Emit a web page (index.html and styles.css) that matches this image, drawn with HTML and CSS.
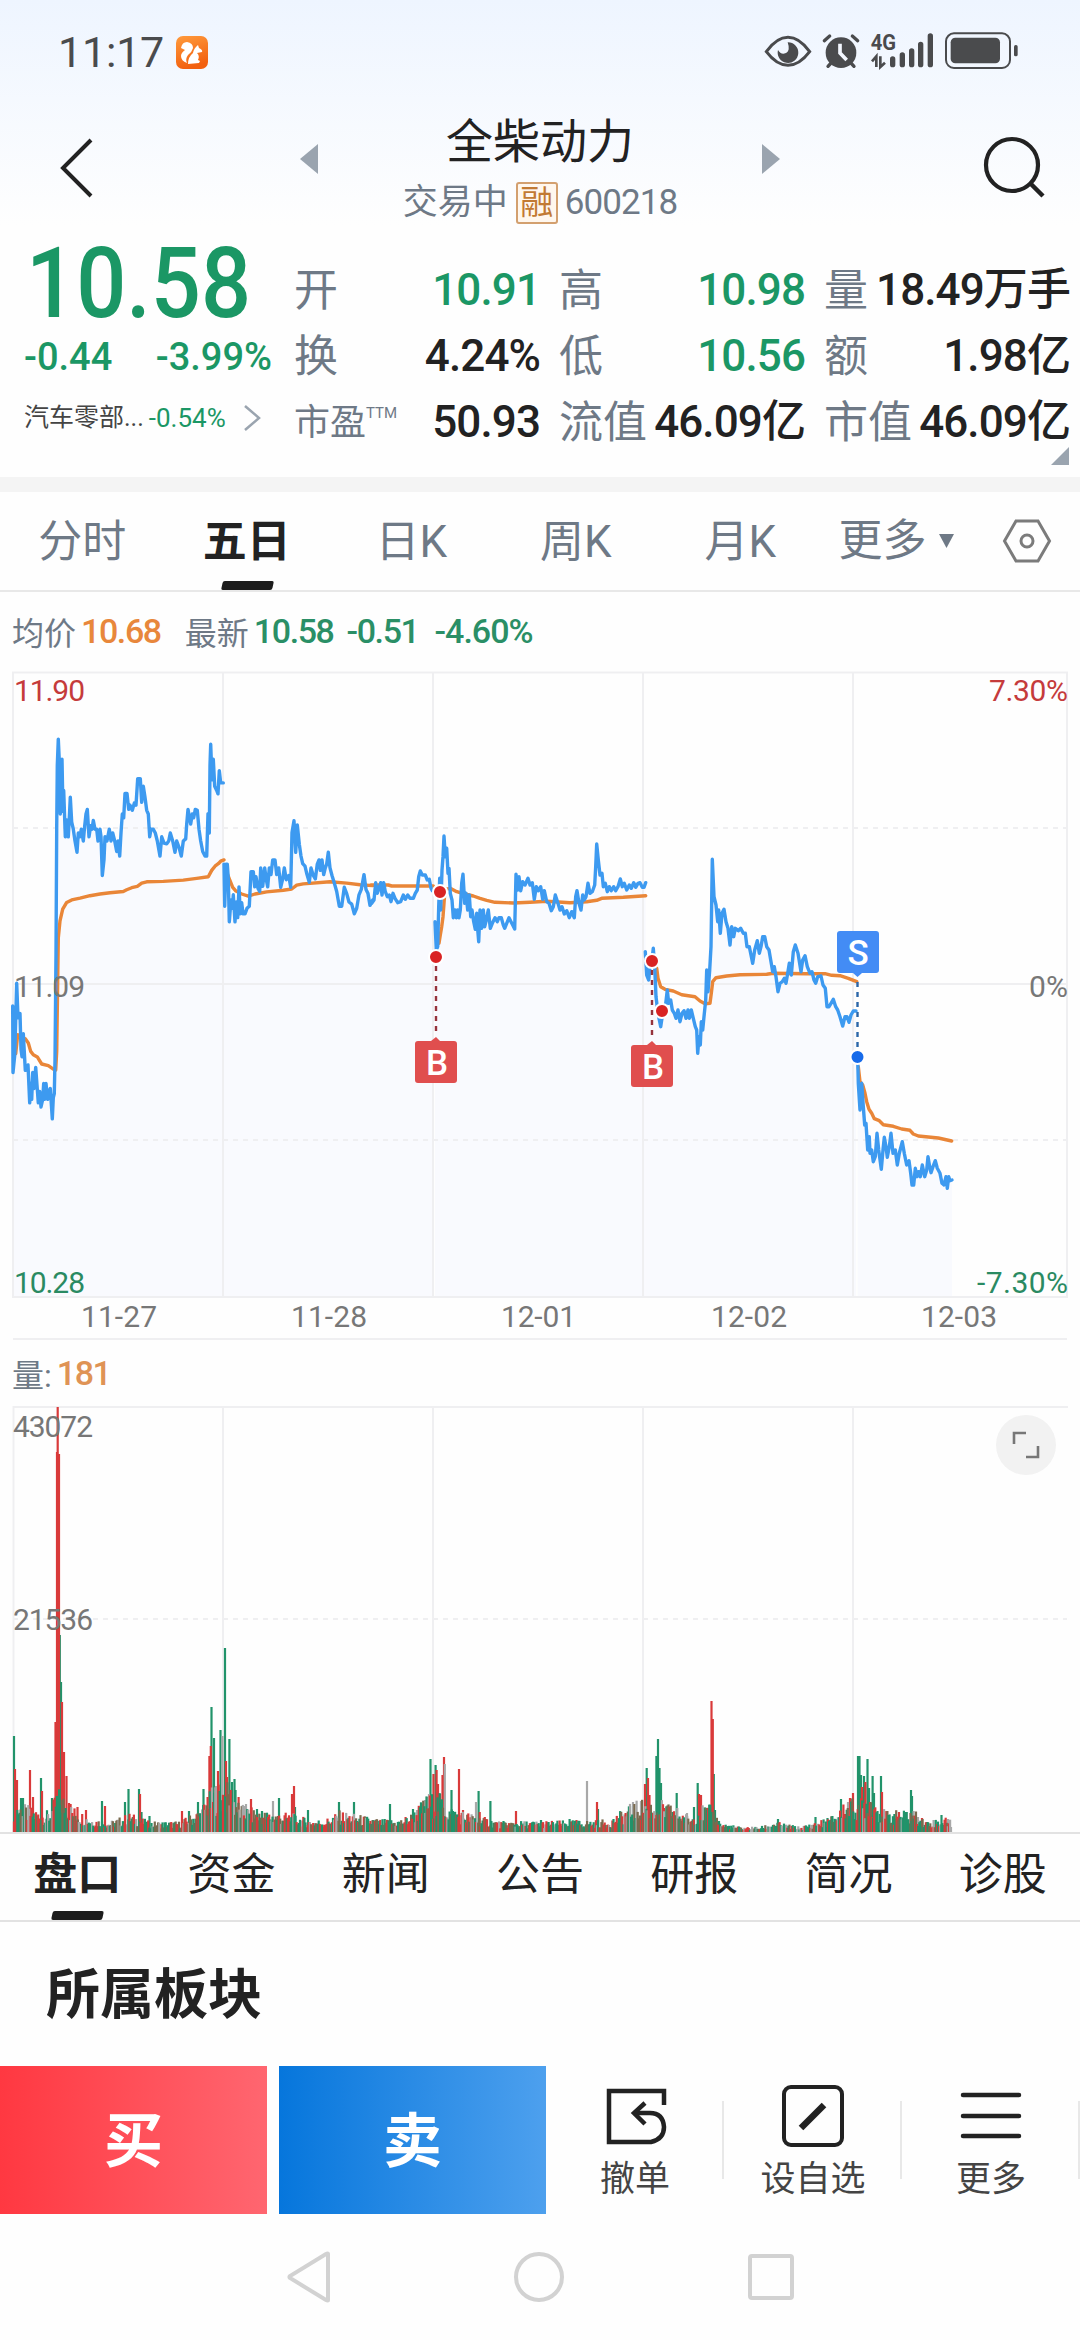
FILE: index.html
```
<!DOCTYPE html>
<html lang="zh-CN">
<head>
  <meta charset="utf-8">
  <meta name="viewport" content="width=device-width">
  <title>全柴动力 600218</title>
  <link rel="stylesheet" href="styles.css">
</head>
<body>

  <div class="top">
    <div class="status">
      <span class="clock">11:17</span>
      <svg class="app-icon" width="32" height="33" viewBox="0 0 32 33">
        <defs><linearGradient id="org" x1="0" y1="0" x2="0.3" y2="1"><stop offset="0" stop-color="#ff9b3c"/><stop offset="1" stop-color="#f2600f"/></linearGradient></defs>
        <rect width="32" height="33" rx="7" fill="url(#org)"/>
        <path fill="#fff" d="M5 12 Q6 6 11 6 Q17 7 17 12 Q16 16 12 19 Q9 23 11 27 Q5 25 5 20 Q5 17 9 14 Z"/>
        <path fill="#fff" d="M22 9 L23 12 Q27 14 26 16 L21 17 Q24 20 22 24 L24 25 L23 27 L12 28 Q12 21 17 17 Q18 12 22 9 Z"/>
      </svg>
      <svg class="status-icons" width="280" height="60" viewBox="0 0 840 180" fill="#4a4b4d">
        <path d="M49 95 Q80 52 114 52 Q148 52 179 95 Q148 136 114 136 Q80 136 49 95 Z" fill="none" stroke="#4a4b4d" stroke-width="9"/>
        <path d="M113 67 A31 31 0 1 1 84 90 Q90 101 100 101 Q113 101 116 88 Q117 78 113 67 Z"/>
        <circle cx="273" cy="98" r="46"/>
        <path d="M223 62 L239 48 M323 62 L307 48 M234 139 L246 126 M312 139 L300 126" stroke="#4a4b4d" stroke-width="10" stroke-linecap="round"/>
        <path d="M270 71 V99 L290 120" stroke="#f3f7ff" stroke-width="11" fill="none"/>
        <text x="362" y="91" class="net" textLength="76" lengthAdjust="spacingAndGlyphs">4G</text>
        <path d="M366 124 L379 109 V141 M405 128 L391 141 V109" fill="none" stroke="#4a4b4d" stroke-width="8"/>
        <path d="M428 117 V134 M457 105 V134 M485 93 V134 M512 73 V134 M541 48 V134" stroke="#4a4b4d" stroke-width="16" stroke-linecap="round"/>
        <rect x="588" y="40" width="192" height="104" rx="24" fill="none" stroke="#4a4b4d" stroke-width="6"/>
        <rect x="602" y="53" width="148" height="77" rx="14"/>
        <rect x="792" y="75" width="11" height="34" rx="5"/>
      </svg>
    </div>

    <div class="header">
      <svg class="back" width="40" height="64" viewBox="0 0 40 64"><path d="M34 5 L6 33 L34 61" fill="none" stroke="#222" stroke-width="4"/></svg>
      <svg class="arrow prev" width="18" height="30"><path d="M18 0 V30 L0 15 Z" fill="#9aa4af"/></svg>
      <div class="name">
        <h1>全柴动力</h1>
        <p>交易中<i>融</i><span class="code">600218</span></p>
      </div>
      <svg class="arrow next" width="18" height="30"><path d="M0 0 V30 L18 15 Z" fill="#9aa4af"/></svg>
      <svg class="search" width="64" height="62" viewBox="0 0 64 62"><circle cx="29" cy="29" r="26" fill="none" stroke="#222" stroke-width="4.2"/><path d="M47 47 L60 60" stroke="#222" stroke-width="4.5"/></svg>
    </div>

    <div class="quote">
      <div class="last">
        <div class="price">10.58</div>
        <div class="change"><span>-0.44</span><span>-3.99%</span></div>
        <div class="sector">汽车零部...<b>-0.54%</b><svg width="18" height="28" viewBox="0 0 18 28"><path d="M2 2 L16 14 L2 26" fill="none" stroke="#9aa4af" stroke-width="2.5"/></svg></div>
      </div>
      <dl class="stats">
        <div><dt>开</dt><dd class="down">10.91</dd></div>
        <div><dt>高</dt><dd class="down">10.98</dd></div>
        <div><dt>量</dt><dd>18.49万手</dd></div>
        <div><dt>换</dt><dd>4.24%</dd></div>
        <div><dt>低</dt><dd class="down">10.56</dd></div>
        <div><dt>额</dt><dd>1.98亿</dd></div>
        <div><dt class="small">市盈<sup>TTM</sup></dt><dd>50.93</dd></div>
        <div><dt>流值</dt><dd>46.09亿</dd></div>
        <div><dt>市值</dt><dd>46.09亿</dd></div>
      </dl>
      <svg class="corner" width="18" height="18"><path d="M18 0 V18 H0 Z" fill="#9aa4af"/></svg>
    </div>
  </div>

  <div class="periods">
    <a>分时</a>
    <a class="active">五日</a>
    <a>日K</a>
    <a>周K</a>
    <a>月K</a>
    <a class="more">更多<svg width="15" height="14"><path d="M0 0 H15 L7.5 14 Z" fill="#6e7986"/></svg></a>
    <a class="gear"><svg width="50" height="44" viewBox="0 0 50 44" fill="none" stroke="#7b7b7b" stroke-width="3"><path d="M14 2 H36 L47.5 22 L36 42 H14 L2.5 22 Z"/><circle cx="25" cy="22" r="6"/></svg></a>
  </div>

  <div class="legend">
    <span>均价</span><b class="avg">10.68</b>
    <span class="gap">最新</span><b>10.58</b><b class="diff">-0.51</b><b class="pct">-4.60%</b>
  </div>

  <svg class="chart" width="1080" height="690" viewBox="0 660 1080 690">
    <g id="areas" fill="#f9fafe"></g>
    <g class="grid">
      <path d="M13 672.5 H1067 V1297 H13 Z M13 984 H1067 M223 672 V1297 M433 672 V1297 M643 672 V1297 M853 672 V1297 M13 1339 H1067"/>
      <path class="dash" d="M13 828 H1067 M13 1140 H1067"/>
    </g>
    <g id="averages" class="line average"></g>
    <g id="prices" class="line price-line"></g>

    <g class="axis">
      <text x="14" y="701" textLength="71" class="up">11.90</text>
      <text x="1068" y="701" textLength="79" class="up end">7.30%</text>
      <text x="14" y="997" textLength="71">11.09</text>
      <text x="1068" y="997" textLength="39" class="end">0%</text>
      <text x="14" y="1293" textLength="71" class="down">10.28</text>
      <text x="1068" y="1293" textLength="91" class="down end">-7.30%</text>
      <text x="81" y="1327" textLength="76">11-27</text>
      <text x="291" y="1327" textLength="76">11-28</text>
      <text x="501" y="1327" textLength="75">12-01</text>
      <text x="711" y="1327" textLength="76">12-02</text>
      <text x="921" y="1327" textLength="76">12-03</text>
    </g>

    <!-- trade marks -->
    <g class="mark buy">
      <path d="M436 966 V1032"/>
      <circle cx="436" cy="957" r="7"/><circle cx="440" cy="892" r="7"/>
      <path class="flag" d="M418 1041 H431 L436 1037 L440 1041 H454 Q457 1041 457 1044 V1080 Q457 1083 454 1083 H418 Q415 1083 415 1080 V1044 Q415 1041 418 1041 Z"/>
      <text x="437" y="1075">B</text>
    </g>
    <g class="mark buy">
      <path d="M652 970 V1036"/>
      <circle cx="652" cy="961" r="7"/><circle cx="662" cy="1011" r="7"/>
      <path class="flag" d="M634 1045 H647 L652 1041 L656 1045 H670 Q673 1045 673 1048 V1084 Q673 1087 670 1087 H634 Q631 1087 631 1084 V1048 Q631 1045 634 1045 Z"/>
      <text x="653" y="1079">B</text>
    </g>
    <g class="mark sell">
      <path d="M857.5 982 V1050"/>
      <circle cx="857.5" cy="1057" r="7"/>
      <path class="flag" d="M840 931 H876 Q879 931 879 934 V970 Q879 973 876 973 H862 L857.5 977 L853 973 H840 Q837 973 837 970 V934 Q837 931 840 931 Z"/>
      <text x="858" y="965">S</text>
    </g>
  </svg>

  <div class="legend volume-legend"><span>量:</span><b class="avg">181</b></div>

  <div class="volume">
    <svg width="1080" height="432" viewBox="0 1400 1080 432">
      <g class="grid">
        <path d="M13.5 1832 V1407 H1068 M223 1407 V1832 M433 1407 V1832 M643 1407 V1832 M853 1407 V1832"/>
        <path class="dash" d="M13 1619 H1067"/>
      </g>
      <g id="bars"></g>
      <g class="axis">
        <text x="13" y="1437" textLength="80">43072</text>
        <text x="13" y="1630" textLength="80">21536</text>
      </g>
    </svg>
    <button class="expand"><svg width="28" height="28" viewBox="0 0 28 28"><path d="M2 13 V2 H14 M26 15 V26 H14" fill="none" stroke="#777" stroke-width="2.6"/></svg></button>
  </div>

  <div class="sections">
    <a class="active">盘口</a>
    <a>资金</a>
    <a>新闻</a>
    <a>公告</a>
    <a>研报</a>
    <a>简况</a>
    <a>诊股</a>
  </div>

  <h2>所属板块</h2>

  <div class="actions">
    <button class="trade buy-btn">买</button>
    <button class="trade sell-btn">卖</button>
    <a>
      <svg width="64" height="62" viewBox="0 0 64 62" fill="none" stroke="#222" stroke-width="4.5"><path d="M61 20 V6 H6 V57 H48 Q61 54 61 42 Q60 28 47 28 H32"/><path d="M42 18 L31 28 L42 39"/></svg>
      撤单
    </a>
    <a>
      <svg width="64" height="62" viewBox="0 0 64 62" fill="none" stroke="#222" stroke-width="4"><rect x="3" y="2" width="58" height="58" rx="7"/><path d="M20 43 L43 20" stroke-width="6.5"/></svg>
      设自选
    </a>
    <a>
      <svg width="64" height="62" viewBox="0 0 64 62" fill="none" stroke="#222" stroke-width="4.5" stroke-linecap="round"><path d="M4 10 H60 M4 31 H60 M4 51 H60"/></svg>
      更多
    </a>
  </div>

  <div class="navbar">
    <svg width="46" height="54" viewBox="0 0 46 54"><path d="M42 4 V50 Q42 51 40 50 L4 28 Q3 27 4 26 L40 4 Q42 3 42 4 Z"/></svg>
    <svg width="54" height="54" viewBox="0 0 54 54"><circle cx="27" cy="27" r="23"/></svg>
    <svg width="50" height="54" viewBox="0 0 50 54"><rect x="4" y="6" width="42" height="42" rx="2"/></svg>
  </div>

  <script src="chart.js"></script>
</body>
</html>
```

FILE: styles.css
```
* {
  box-sizing: border-box;
}

body {
  margin: 0;
  width: 1080px;
  background: #fefefe;
  color: #222;
  font-family: Roboto, "Noto Sans CJK SC", sans-serif;
}

h1, h2, p, dl, dd {
  margin: 0;
  font-weight: 400;
}

svg {
  display: block;
  flex: none;
}

button {
  border: 0;
  padding: 0;
  font-family: inherit;
}

.down { color: #1b9765; }

.top {
  height: 477px;
  background: linear-gradient(#eef5ff, #fefefe 225px);
}

/* status bar */
.status {
  display: flex;
  align-items: center;
  height: 104px;
  padding: 0 50px 0 58px;
}

.clock {
  width: 118px;
  font-size: 43px;
  letter-spacing: -0.2px;
  color: #4a4b4d;
}

.status-icons {
  margin-left: auto;
  margin-bottom: 4px;
}

.net {
  font: 700 64px Roboto, sans-serif;
}

/* title */
.header {
  display: flex;
  height: 128px;
  padding: 0 33px 0 57px;
}

.back { margin-top: 31px; }
.arrow { margin-top: 40px; }
.prev { margin-left: 203px; }
.next { margin-right: 203px; }
.search { margin-top: 32px; }

.name {
  flex: 1;
  text-align: center;
}

.name h1 {
  margin-top: 6px;
  font-size: 47px;
  line-height: 64px;
}

.name p {
  display: flex;
  justify-content: center;
  align-items: center;
  margin-top: 8px;
  font-size: 35px;
  line-height: 42px;
  color: #6e7986;
}

.name i {
  width: 42px;
  height: 42px;
  margin: 0 7px 0 8px;
  border: 2px solid #d3a06f;
  border-radius: 3px;
  background: #fff7ee;
  color: #c27a33;
  font-size: 33px;
  font-style: normal;
  line-height: 37px;
}

.code {
  letter-spacing: -0.9px;
}

/* quote */
.quote {
  position: relative;
  display: flex;
  height: 245px;
}

.last {
  width: 294px;
  padding-left: 24px;
  color: #1b9765;
}

/* squeezed digits */
.price {
  margin-left: 2px;
  padding-top: 3px;
  font-size: 98px;
  font-weight: 500;
  line-height: 98px;
  transform: scaleX(0.9);
  transform-origin: left;
}

.change {
  display: flex;
  justify-content: space-between;
  padding-right: 22px;
  font-size: 38px;
  font-weight: 500;
  line-height: 48px;
  letter-spacing: 0;
}

.sector {
  display: flex;
  align-items: center;
  margin-top: 19px;
  font-size: 25px;
  line-height: 36px;
  color: #444;
}

.sector b {
  margin: 0 17px 0 5px;
  font-size: 26px;
  font-weight: 400;
  color: #1b9765;
}

.stats {
  display: grid;
  grid-template-columns: repeat(3, 246px);
  grid-auto-rows: 66px;
  column-gap: 19px;
  padding-top: 25px;
}

.stats div {
  display: flex;
  justify-content: space-between;
  line-height: 66px;
  white-space: nowrap;
}

.stats dt {
  padding-top: 1px;
  font-size: 44px;
  color: #6e7986;
}

.stats .small {
  font-size: 36px;
}

.small sup {
  font-size: 15px;
  line-height: 0;
  vertical-align: 17px;
}

.stats dd {
  font-size: 44px;
  font-weight: 500;
  letter-spacing: -0.9px;
}

.corner {
  position: absolute;
  right: 11px;
  bottom: 12px;
}

/* period tabs */
.periods {
  display: flex;
  height: 115px;
  border-top: 15px solid #f4f4f4;
  border-bottom: 2px solid #e8e8e8;
  font-size: 44px;
  line-height: 101px;
  color: #6e7986;
}

.periods a {
  flex: none;
  width: 164.5px;
  text-align: center;
}

.periods .more {
  display: flex;
  align-items: center;
  gap: 12px;
  width: 163px;
  padding-left: 16px;
}

.periods .gear {
  display: flex;
  align-items: center;
  width: 80px;
  padding-left: 16px;
}

.periods .active,
.sections .active {
  position: relative;
  font-weight: 700;
  color: #222;
}

.active::after {
  content: "";
  position: absolute;
  bottom: 0;
  left: 50%;
  width: 51px;
  height: 9px;
  margin-left: -25px;
  border-radius: 2px;
  background: #1c1c1c;
  transform: skewX(-12deg);
}

/* indicator values */
.legend {
  display: flex;
  align-items: center;
  height: 68px;
  padding: 9px 12px 0;
  font-size: 32px;
  color: #6e7986;
}

.legend b {
  margin-left: 5px;
  font-size: 34px;
  font-weight: 500;
  letter-spacing: -1.4px;
  color: #2a8f66;
}

.legend .avg { color: #e8873b; }
.legend .gap { margin-left: 24px; }
.legend .diff { margin-left: 13px; }
.legend .pct { margin-left: 16px; letter-spacing: -1px; }

.volume-legend {
  height: 50px;
  padding-top: 0;
  padding-bottom: 5px;
}

.volume-legend .avg { color: #df9355; }

/* charts */
.grid path {
  fill: none;
  stroke: #efeff1;
  stroke-width: 2;
}

.grid .dash {
  stroke-dasharray: 5 5;
}

.line path {
  fill: none;
  stroke-width: 3.4;
  stroke-linejoin: round;
  stroke-linecap: round;
}

.average path { stroke: #e98638; }
.price-line path { stroke: #3d9af0; }

.axis text {
  font: 30px Roboto, sans-serif;
  fill: #777;
}

.axis .up { fill: #c53b3b; }
.axis .down { fill: #2a8a62; }
.axis .end { text-anchor: end; }

.mark path {
  fill: none;
  stroke-width: 2.4;
  stroke-dasharray: 5 5;
}

.mark circle {
  stroke: #fff;
  stroke-width: 2;
}

.mark .flag {
  stroke: none;
}

.mark text {
  font: 500 35px Roboto, sans-serif;
  fill: #fff;
  text-anchor: middle;
}

.buy path { stroke: #96333c; }
.buy circle { fill: #d92323; }
.buy .flag { fill: #e04e4e; }
.sell path { stroke: #2b66a8; }
.sell circle { fill: #176bea; }
.sell .flag { fill: #438cf5; }

.volume {
  position: relative;
  height: 432px;
}

.expand {
  position: absolute;
  top: 15px;
  right: 24px;
  width: 60px;
  height: 60px;
  padding-left: 16px;
  border-radius: 50%;
  background: #f2f2f2;
}

/* lower tabs */
.sections {
  display: flex;
  height: 90px;
  border-top: 2px solid #e2e2e2;
  border-bottom: 2px solid #e2e2e2;
  font-size: 44px;
  line-height: 82px;
}

.sections a {
  flex: 1;
  text-align: center;
}

h2 {
  height: 144px;
  padding-left: 46px;
  font-size: 54px;
  font-weight: 700;
  line-height: 148px;
}

/* bottom bar */
.actions {
  display: flex;
  height: 148px;
}

.trade {
  width: 267px;
  margin-right: 12px;
  padding-bottom: 7px;
  color: #fff;
  font-size: 59px;
  font-weight: 700;
}

.buy-btn { background: linear-gradient(90deg, #ff3841, #ff6670); }
.sell-btn { background: linear-gradient(90deg, #0676dc, #4da0ee); margin-right: 0; }

.actions a {
  position: relative;
  display: flex;
  flex-direction: column;
  align-items: center;
  width: 178px;
  padding-top: 19px;
  font-size: 35px;
  line-height: 65px;
  color: #444;
}

.actions a::after {
  content: "";
  position: absolute;
  top: 35px;
  right: 0;
  width: 2px;
  height: 78px;
  background: #e8e8e8;
}

.navbar {
  display: flex;
  justify-content: center;
  align-items: center;
  gap: 180px;
  height: 126px;
  padding-left: 2px;
}

.navbar svg {
  fill: none;
  stroke: #d2d2d2;
  stroke-width: 4;
}
```

FILE: chart.js
```
const NS = 'http://www.w3.org/2000/svg';

// every trace: [[x origin, y origin, x step, y step], price points, average points]
const A = [0, 660, 1 / 3, 1 / 2.376];
const B = [370, 760, 1 / 3, 1 / 3];
const C = [640, 800, 1 / 3, 1 / 3];

const traces = [
  [A, '38,822 39,980 44,940 50,768 54,850 60,840 63,925 66,943 70,888 76,975 84,962 89,1052 92,1006 95,1044 98,980 102,1018 107,968 111,1010 115,1052 119,1025 123,1062 128,1044 131,1006 134,1044 138,1006 143,1044 147,1025 151,1018 157,1090 160,1040 163,1030 165,950 168,700 170,400 172,250 175,188 178,240 181,366 184,290 186,236 189,360 191,310 196,420 200,380 205,420 208,375 211,326 215,385 220,402 225,430 231,457 235,411 240,420 244,402 250,430 254,394 258,366 262,355 267,420 272,394 276,402 280,381 285,402 290,402 294,430 300,402 303,420 307,512 312,475 315,420 321,430 328,402 333,430 338,411 344,430 350,455 354,430 359,466 363,411 367,366 371,375 375,317 381,317 386,355 390,345 397,357 403,340 408,345 413,282 421,282 425,338 430,300 435,326 440,357 445,366 449,420 453,402 460,402 466,411 472,430 480,466 485,420 492,435 500,437 506,430 511,411 518,430 525,457 530,430 537,445 544,466 550,430 557,425 560,390 564,355 572,390 577,366 581,375 586,355 592,357 597,402 602,430 608,455 615,466 620,466 624,365 628,411 630,250 632,200 636,285 640,236 644,300 650,310 654,318 658,263 662,292 670,292',
    '47,935 53,890 62,895 76,900 85,910 92,930 100,938 112,943 125,960 145,964 160,972 167,974 170,930 173,760 175,660 180,620 188,592 200,576 215,570 240,566 270,560 300,556 330,553 370,550 380,546 395,541 412,538 425,530 440,527 490,526 550,523 590,519 625,515 635,500 645,490 655,484 662,478 672,475'],
  [A, '672,485 674,585 678,485 682,485 685,520 688,622 693,570 697,590 700,558 705,622 709,575 713,612 717,539 721,603 725,577 729,603 735,603 741,590 748,585 753,503 760,503 764,539 768,515 774,543 779,550 782,494 788,538 794,494 799,522 803,539 808,494 813,510 818,475 825,475 830,510 836,494 842,540 848,520 853,494 859,522 866,512 872,540 876,410 882,382 887,457 892,392 898,438 903,466 908,484 915,490 921,510 928,528 933,494 940,512 946,520 952,485 957,475 961,500 966,475 971,510 976,494 980,485 985,457 990,494 996,512 1003,530 1010,550 1018,585 1025,585 1033,540 1040,555 1047,575 1055,580 1063,603 1070,590 1077,558 1084,545 1092,510 1098,545 1104,555 1110,583 1118,570',
    '678,500 688,520 698,540 708,549 725,556 745,561 765,556 800,551 850,547 875,544 890,535 910,532 990,527 1040,530 1080,534 1118,536'],
  [B, '3,425 5,430 12,420 17,368 22,400 27,385 32,368 36,405 41,368 46,395 52,410 58,405 63,425 69,400 75,415 83,428 92,425 100,405 106,418 113,405 120,415 130,415 136,400 142,390 146,350 151,333 157,345 166,345 172,360 178,358 183,385 187,392',
    '3,375 55,375 65,378 190,378'],
  [B, '195,485 199,570 203,560 206,440 209,355 212,450 216,330 219,290 222,228 226,290 230,265 234,340 237,325 241,400 246,420 250,473 255,450 259,473 263,450 267,473 271,450 275,370 279,343 284,430 288,400 293,450 298,405 302,470 306,450 311,485 316,508 320,460 323,508 326,545 330,450 335,505 340,450 344,500 349,480 355,450 361,505 367,490 375,473 382,485 387,473 394,473 400,495 404,505 410,490 417,473 423,485 428,495 434,507 438,343 443,390 447,350 452,392 458,365 465,375 474,355 480,375 487,368 493,418 499,380 505,392 512,380 518,418 523,392 530,425 537,430 544,452 550,440 556,405 564,430 570,450 576,440 583,462 590,452 598,473 605,455 613,473 617,410 621,392 627,430 633,450 638,405 643,420 648,410 654,370 660,400 667,395 674,375 677,320 680,252 685,300 690,345 696,340 700,380 706,370 712,395 718,380 724,392 731,380 737,392 744,380 751,357 757,380 763,370 770,390 778,375 784,385 791,368 797,382 804,370 810,368 817,382 822,382 827,368',
    '207,550 211,525 215,500 219,470 222,430 225,388 241,385 260,395 285,402 310,408 330,415 350,421 375,427 430,429 480,427 530,424 600,428 650,425 680,421 695,415 760,412 827,407'],
  [C, '16,455 20,525 26,540 30,500 36,480 40,445 44,500 48,590 54,640 62,680 68,640 75,630 82,570 86,610 92,600 97,630 103,640 108,655 114,630 120,665 126,640 132,632 138,655 144,630 148,655 154,630 160,655 166,680 170,690 173,760 177,710 181,735 184,665 188,690 192,650 197,600 200,510 204,575 209,510 213,440 215,300 217,178 222,290 228,315 233,365 236,330 241,400 246,340 252,328 258,365 264,385 270,435 275,380 281,410 286,385 295,392 302,385 310,400 316,400 321,440 328,440 333,465 338,490 344,450 352,422 358,460 363,440 368,410 374,410 380,440 387,450 392,480 398,515 403,500 408,530 414,575 420,550 427,545 433,535 438,550 443,520 448,490 454,525 460,455 466,435 474,460 483,515 488,480 495,467 502,500 510,520 516,515 522,540 527,550 533,530 543,528 549,555 556,565 561,620 567,620 573,610 580,598 587,620 593,630 600,650 608,678 615,650 621,650 627,667 633,645 640,633 648,633',
    '40,480 50,505 54,535 62,560 75,568 100,573 125,584 165,590 180,603 195,611 210,610 214,580 218,545 228,533 260,528 300,524 380,523 400,520 500,521 555,521 575,526 600,527 625,535 650,545'],
  [C, '653,775 655,850 660,930 665,850 670,920 674,975 678,970 683,1050 688,1010 690,1060 695,1050 700,1085 706,1070 711,1000 716,1050 724,1108 729,1050 733,1012 738,1040 742,1072 748,1040 753,1000 759,1060 766,1050 772,1095 778,1060 787,1025 793,1060 800,1095 807,1082 812,1120 816,1155 821,1155 826,1105 831,1130 836,1115 841,1130 847,1095 854,1130 860,1110 864,1070 869,1100 873,1118 879,1100 886,1082 892,1105 900,1120 906,1150 912,1155 918,1130 922,1165 926,1130 930,1142 936,1140',
    '655,800 660,845 668,855 675,880 680,905 687,928 695,940 703,956 718,962 730,974 760,979 785,987 810,991 820,1002 835,1008 895,1014 935,1023']
];

function toPoints(frame, str) {
  return str.split(' ').map(p => {
    const [x, y] = p.split(',').map(Number);
    return [(frame[0] + x * frame[2]).toFixed(1), (frame[1] + y * frame[3]).toFixed(1)];
  });
}

function addPath(parent, d) {
  const path = document.createElementNS(NS, 'path');
  path.setAttribute('d', d);
  document.getElementById(parent).appendChild(path);
  return path;
}

traces.forEach(([frame, price, average]) => {
  const pts = toPoints(frame, price);
  const last = pts[pts.length - 1];
  addPath('areas', `M${pts[0][0]} 1297 L${pts.join(' ')} L${last[0]} 1297 Z`);
  addPath('prices', 'M' + pts.join(' L'));
  addPath('averages', 'M' + toPoints(frame, average).join(' L'));
});

// volume
const GREEN = '#21936a';
const RED = '#d93a3a';
const GRAY = '#a8a8a8';
const BROWN = '#7a6a4e';

// small bars follow this envelope: [x, height]
const envelope = [[14, 30], [40, 20], [50, 20], [58, 42], [72, 25], [90, 14], [110, 10], [130, 18], [150, 10], [180, 10], [200, 22], [215, 46], [230, 46], [240, 26], [260, 20], [290, 18], [310, 12], [325, 12], [340, 20], [360, 16], [380, 12], [400, 12], [412, 18], [428, 36], [440, 36], [450, 24], [480, 15], [500, 10], [590, 11], [610, 12], [630, 26], [645, 32], [660, 30], [680, 22], [690, 14], [700, 25], [712, 25], [720, 9], [740, 5], [760, 5], [775, 10], [800, 5], [830, 14], [845, 28], [870, 38], [885, 20], [915, 20], [925, 11], [950, 14]];

const peaks = {
  [GREEN]: '14,96 21,34 23,34 41,54 52,34 59.8,197 61,150 102,31 125,30 128.5,43 139,43 141.5,20 149.5,16 189,21 198,30 203.5,43 211.5,125 214,94 220.5,102 225,184 229.4,93 232,50 234.5,53 235.5,42 257,23 262,21 279,34 295,25 308,22 339,30 354,30 390,28 413,23 430.5,73 435.6,67 451.5,42 478.6,41 490.4,31 541,12 569.6,13 598,23 621,18 630,26 646.7,64 656.4,76 658,93 659.5,64 661,49 672.6,20 676.7,39 694,25 697.7,49 713.8,58 715,22 719,11 778,13 815.5,15 827.5,14 841,33 858,76 859.5,76 861,57 864,56 867.5,73 869,44 872.6,56 874,39 881,56 888,17 894.4,18 906.7,20 911,42 912,36 941.5,17',
  [RED]: '15,63 17,52 30,62 33,35 42,41 55.5,110 57,380 57.7,425 59,378 62,130 64,80 66.5,56 69,29 70.6,28 77.5,25 86,22 105,26 140,38 182,21 207.6,35 209.4,76 210.8,86 218,61 226,71 227,55 238.6,35 251,33 292,38 294,46 433.5,58 436.6,62 438,48 440,38 442.5,57 444,75 459,63 463,22 479.7,20 516,21 576.5,12 597,30 645,48 648,54 649.5,37 664,24 667,23 699,38 701,37 707,24 711.5,131 712.8,113 845,18 850,34 853,39 862,45 865.4,50 870,30 875.7,20 882,40 899,20 922,14',
  [GRAY]: '216,46 222.5,96 244,26 246,28 273,31 417,22 419,24 421,27 423,28 425,32 427,35 429,38 444.8,68 476,30 587,51 633,30 641,31 642,31 687,19 848,30 913.6,21 918,15 948,13 951,5'
};

function rand(i) {
  const v = Math.sin(i * 12.9898) * 43758.5453;
  return v - Math.floor(v);
}

function level(x) {
  const i = envelope.findIndex(e => e[0] > x);
  if (i < 1) return envelope[i < 0 ? envelope.length - 1 : 0][1];
  const [x0, h0] = envelope[i - 1];
  const [x1, h1] = envelope[i];
  return h0 + (h1 - h0) * (x - x0) / (x1 - x0);
}

function bar(x, h, color) {
  const path = addPath('bars', `M${x} 1832 V${1832 - h}`);
  path.setAttribute('stroke', color);
  path.setAttribute('stroke-width', 2.2);
}

Object.keys(peaks).forEach(color => {
  peaks[color].split(' ').forEach(p => {
    const [x, h] = p.split(',').map(Number);
    bar(x, h, color);
  });
});

for (let i = 0, x = 14; x < 951; i++, x += 1.1) {
  const c = rand(i + 500);
  const color = c < 0.38 ? GREEN : c < 0.62 ? RED : c < 0.87 ? BROWN : GRAY;
  bar(x.toFixed(1), (level(x) * (0.35 + 0.75 * rand(i))).toFixed(1), color);
}
```
